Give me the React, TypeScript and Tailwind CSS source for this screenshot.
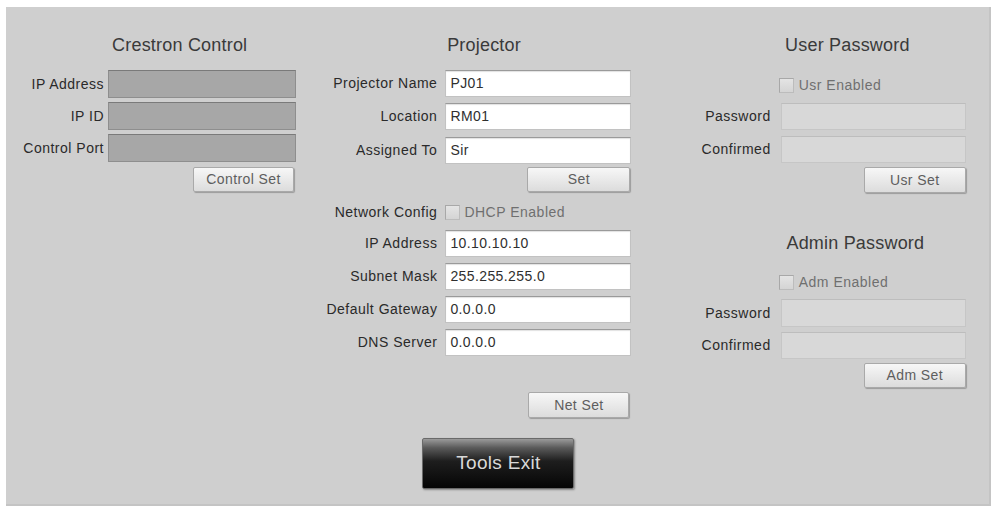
import React from "react";

const font = "font-['Liberation_Sans',Arial,Helvetica,sans-serif]";

function Title({ text, pl }: { text: string; pl: string }) {
  return (
    <div className={`h-[22px] leading-[22px] text-[18px] text-[#3a3a3a] text-center tracking-[0.2px] ${pl}`}>
      {text}
    </div>
  );
}

function Btn({ text, cls }: { text: string; cls: string }) {
  return (
    <div
      className={`flex items-center justify-center rounded-[2px] border border-[#a9a9a9] bg-gradient-to-b from-[#f7f7f7] to-[#dcdcdc] text-[14px] tracking-[0.4px] text-[#5e5e5e] shadow-[1px_1px_1px_rgba(0,0,0,0.25)] ${cls}`}
    >
      {text}
    </div>
  );
}

type Kind = "dark" | "white" | "disabled";

function Field({ kind, value, w, h }: { kind: Kind; value?: string; w: string; h: string }) {
  const k =
    kind === "dark"
      ? "bg-[#a7a7a7] border border-[#8e8e8e] border-t-[#7a7a7a]"
      : kind === "white"
      ? "bg-white border border-[#c2c2c2] border-t-[#9a9a9a] shadow-[inset_0_1px_1px_rgba(0,0,0,0.12)]"
      : "bg-[#d8d8d8] border border-[#c6c6c6] border-t-[#bdbdbd]";
  return (
    <div className={`${w} ${h} ${k} flex items-center pl-[4px] text-[14px] tracking-[0.4px] text-[#2f2f2f]`}>
      {value}
    </div>
  );
}

function Row({
  label,
  lw,
  kind,
  value,
  fw,
  h,
  mt,
}: {
  label: string;
  lw: string;
  kind: Kind;
  value?: string;
  fw: string;
  h: string;
  mt?: string;
}) {
  return (
    <div className={`flex items-center ${mt ?? ""}`}>
      <div className={`${lw} text-right text-[14px] tracking-[0.5px] text-[#2a2a2a] whitespace-nowrap`}>{label}</div>
      <Field kind={kind} value={value} w={fw} h={h} />
    </div>
  );
}

function Check({ text, ml, mt }: { text: string; ml: string; mt: string }) {
  return (
    <div className={`flex h-[20px] items-center ${ml} ${mt}`}>
      <div className="h-[15px] w-[15px] border border-[#bcbcbc] border-t-[#a8a8a8] border-l-[#a8a8a8] bg-gradient-to-b from-[#e4e4e4] to-[#d4d4d4]" />
      <div className="ml-[5px] text-[14px] tracking-[0.5px] text-[#6f6f6f]">{text}</div>
    </div>
  );
}

export default function App() {
  return (
    <div className={`w-[995px] h-[509px] bg-white pt-[7px] pl-[6px] ${font}`}>
      <div className="flex w-[985px] h-[499px] bg-[#cfcfcf] border-r-[2px] border-b-[2px] border-[#c4c4c4]">
        {/* Column 1 */}
        <div className="flex w-[300px] flex-col pt-[27px]">
          <Title text="Crestron Control" pl="pl-[48px]" />
          <div className="mt-[14px] flex flex-col gap-[4px]">
            <Row label="IP Address" lw="w-[102px] pr-[4px]" kind="dark" fw="w-[188px]" h="h-[28px]" />
            <Row label="IP ID" lw="w-[102px] pr-[4px]" kind="dark" fw="w-[188px]" h="h-[28px]" />
            <Row label="Control Port" lw="w-[102px] pr-[4px]" kind="dark" fw="w-[188px]" h="h-[28px]" />
          </div>
          <Btn text="Control Set" cls="mt-[5px] ml-[187px] w-[101px] h-[25px]" />
        </div>

        {/* Column 2 */}
        <div className="flex w-[340px] flex-col pt-[27px]">
          <Title text="Projector" pl="pl-[18px]" />
          <Row label="Projector Name" lw="w-[140px] pr-[8px]" kind="white" value="PJ01" fw="w-[186px]" h="h-[27px]" mt="mt-[14px]" />
          <Row label="Location" lw="w-[140px] pr-[8px]" kind="white" value="RM01" fw="w-[186px]" h="h-[27px]" mt="mt-[6px]" />
          <Row label="Assigned To" lw="w-[140px] pr-[8px]" kind="white" value="Sir" fw="w-[186px]" h="h-[27px]" mt="mt-[7px]" />
          <Btn text="Set" cls="mt-[3px] ml-[222px] w-[103px] h-[25px]" />
          <div className="mt-[10px] flex h-[20px] items-center">
            <div className="w-[140px] pr-[8px] text-right text-[14px] tracking-[0.5px] text-[#2a2a2a] whitespace-nowrap">
              Network Config
            </div>
            <div className="h-[15px] w-[15px] border border-[#bcbcbc] border-t-[#a8a8a8] border-l-[#a8a8a8] bg-gradient-to-b from-[#e4e4e4] to-[#d4d4d4]" />
            <div className="ml-[4px] text-[14px] tracking-[0.5px] text-[#6f6f6f]">DHCP Enabled</div>
          </div>
          <Row label="IP Address" lw="w-[140px] pr-[8px]" kind="white" value="10.10.10.10" fw="w-[186px]" h="h-[27px]" mt="mt-[8px]" />
          <Row label="Subnet Mask" lw="w-[140px] pr-[8px]" kind="white" value="255.255.255.0" fw="w-[186px]" h="h-[27px]" mt="mt-[6px]" />
          <Row label="Default Gateway" lw="w-[140px] pr-[8px]" kind="white" value="0.0.0.0" fw="w-[186px]" h="h-[27px]" mt="mt-[6px]" />
          <Row label="DNS Server" lw="w-[140px] pr-[8px]" kind="white" value="0.0.0.0" fw="w-[186px]" h="h-[27px]" mt="mt-[6px]" />
          <Btn text="Net Set" cls="mt-[36px] ml-[223px] w-[101px] h-[26px]" />
          <div className="mt-[20px] ml-[117px] flex h-[51px] w-[152px] items-center justify-center rounded-[2px] border border-[#6a6a6a] bg-[linear-gradient(to_bottom,#9a9a9a_0%,#5a5a5a_18%,#1e1e1e_45%,#050505_100%)] text-[19px] tracking-[0.3px] text-[#d9d9d9] shadow-[1px_1px_2px_rgba(0,0,0,0.35)]">
            Tools Exit
          </div>
        </div>

        {/* Column 3 */}
        <div className="flex w-[345px] flex-col pt-[27px]">
          <Title text="User Password" pl="pl-[61px]" />
          <Check text="Usr Enabled" ml="ml-[134px]" mt="mt-[19px]" />
          <Row label="Password" lw="w-[136px] pr-[10px]" kind="disabled" fw="w-[185px]" h="h-[27px]" mt="mt-[8px]" />
          <Row label="Confirmed" lw="w-[136px] pr-[10px]" kind="disabled" fw="w-[185px]" h="h-[27px]" mt="mt-[6px]" />
          <Btn text="Usr Set" cls="mt-[4px] ml-[219px] w-[102px] h-[26px]" />
          <div className="mt-[39px]">
            <Title text="Admin Password" pl="pl-[77px]" />
          </div>
          <Check text="Adm Enabled" ml="ml-[134px]" mt="mt-[18px]" />
          <Row label="Password" lw="w-[136px] pr-[10px]" kind="disabled" fw="w-[185px]" h="h-[28px]" mt="mt-[7px]" />
          <Row label="Confirmed" lw="w-[136px] pr-[10px]" kind="disabled" fw="w-[185px]" h="h-[27px]" mt="mt-[5px]" />
          <Btn text="Adm Set" cls="mt-[4px] ml-[219px] w-[102px] h-[25px]" />
        </div>
      </div>
    </div>
  );
}
